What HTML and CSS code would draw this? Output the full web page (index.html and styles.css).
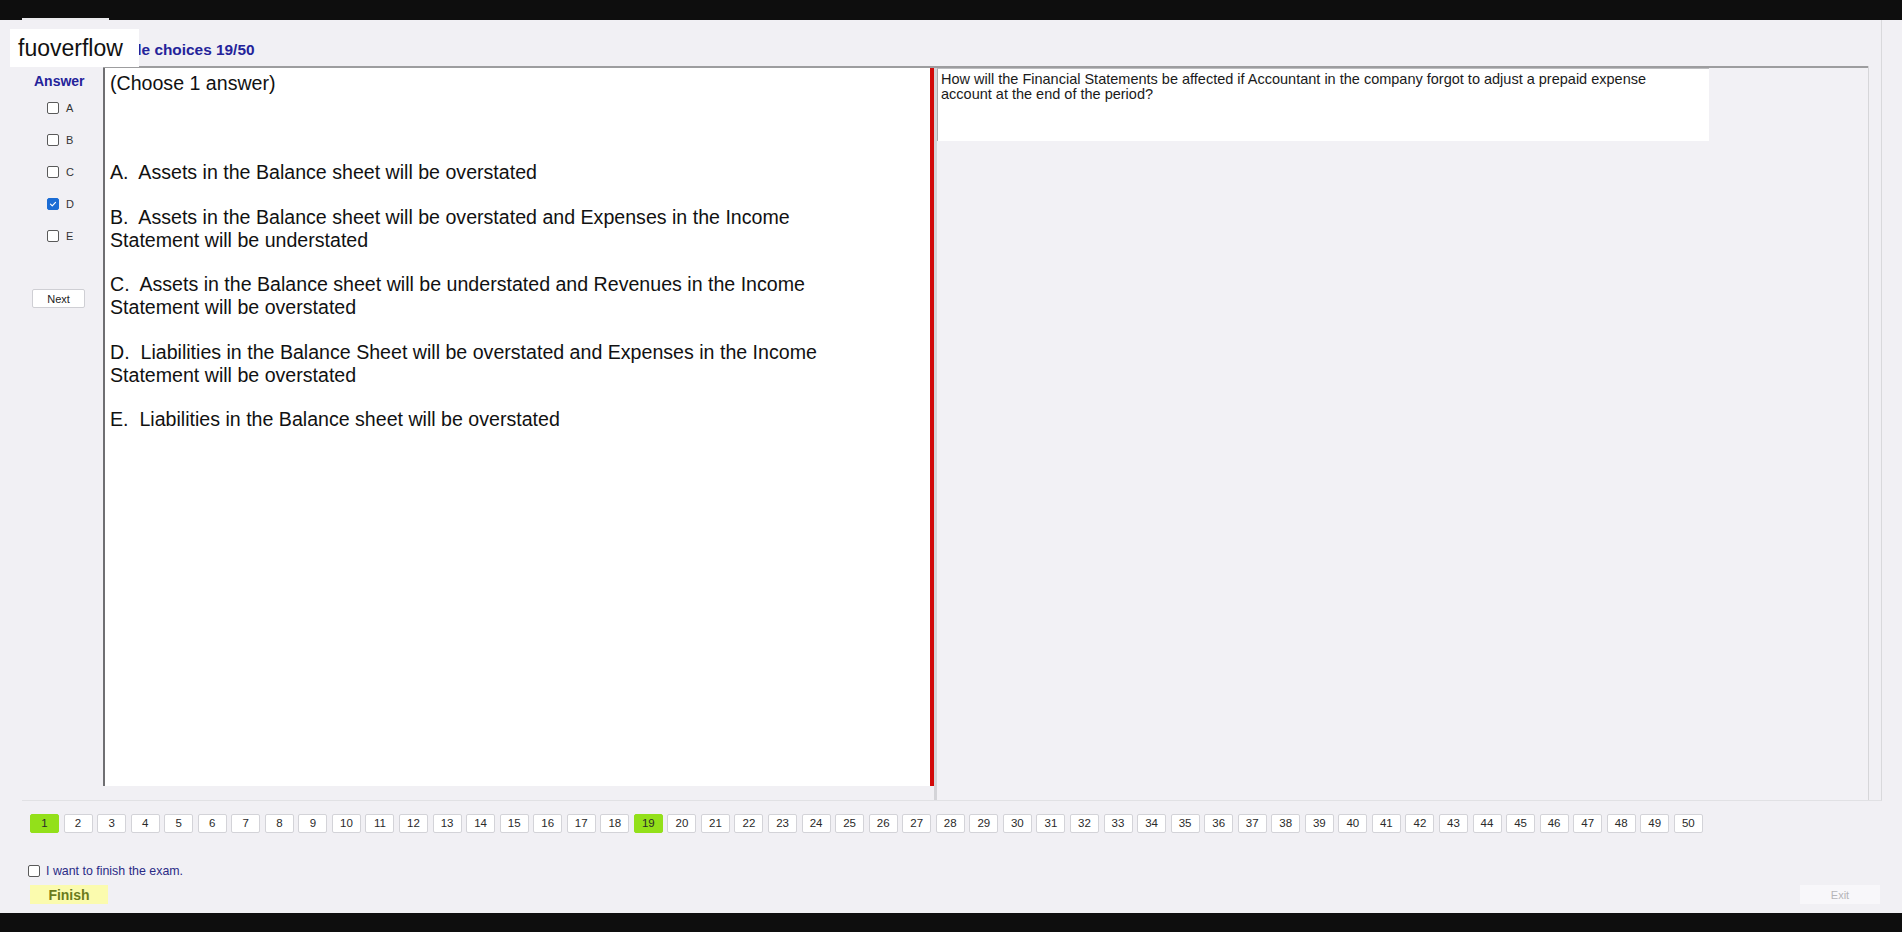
FILE: index.html
```html
<!DOCTYPE html>
<html>
<head>
<meta charset="utf-8">
<link rel="stylesheet" href="styles.css">
</head>
<body>
<div class="topbar"><div class="tab"></div></div>
<div class="screen">
  <div class="window">
    <div class="header"><span class="title">Multiple choices 19/50</span></div>
    <div class="main">
      <aside class="side">
        <div class="ans-title">Answer</div>
        <div class="opts">
          <label class="opt"><span class="cb"></span>A</label>
          <label class="opt"><span class="cb"></span>B</label>
          <label class="opt"><span class="cb"></span>C</label>
          <label class="opt"><span class="cb checked"><svg viewBox="0 0 12 12" width="12" height="12"><path d="M3 6.2 L5.1 8.2 L9 4" fill="none" stroke="#fff" stroke-width="1.4" stroke-linecap="round" stroke-linejoin="round"/></svg></span>D</label>
          <label class="opt"><span class="cb"></span>E</label>
        </div>
        <button class="next">Next</button>
      </aside>
      <div class="content">
        <section class="panel">
          <p class="choose">(Choose 1 answer)</p>
          <div class="options">
            <p>A.&nbsp; Assets in the Balance sheet will be overstated</p>
            <p>B.&nbsp; Assets in the Balance sheet will be overstated and Expenses in the Income Statement will be understated</p>
            <p>C.&nbsp; Assets in the Balance sheet will be understated and Revenues in the Income Statement will be overstated</p>
            <p>D.&nbsp; Liabilities in the Balance Sheet will be overstated and Expenses in the Income Statement will be overstated</p>
            <p>E.&nbsp; Liabilities in the Balance sheet will be overstated</p>
          </div>
        </section>
        <div class="divider"></div>
        <section class="qarea">
          <div class="qbox"><p>How will the Financial Statements be affected if Accountant in the company forgot to adjust a prepaid expense account at the end of the period?</p></div>
        </section>
      </div>
      <div class="strip"></div>
    </div>
  </div>
  <div class="nums">
    <span class="num done">1</span><span class="num">2</span><span class="num">3</span><span class="num">4</span><span class="num">5</span><span class="num">6</span><span class="num">7</span><span class="num">8</span><span class="num">9</span><span class="num">10</span>
    <span class="num">11</span><span class="num">12</span><span class="num">13</span><span class="num">14</span><span class="num">15</span><span class="num">16</span><span class="num">17</span><span class="num">18</span><span class="num done">19</span><span class="num">20</span>
    <span class="num">21</span><span class="num">22</span><span class="num">23</span><span class="num">24</span><span class="num">25</span><span class="num">26</span><span class="num">27</span><span class="num">28</span><span class="num">29</span><span class="num">30</span>
    <span class="num">31</span><span class="num">32</span><span class="num">33</span><span class="num">34</span><span class="num">35</span><span class="num">36</span><span class="num">37</span><span class="num">38</span><span class="num">39</span><span class="num">40</span>
    <span class="num">41</span><span class="num">42</span><span class="num">43</span><span class="num">44</span><span class="num">45</span><span class="num">46</span><span class="num">47</span><span class="num">48</span><span class="num">49</span><span class="num">50</span>
  </div>
  <label class="finish-check"><span class="cb"></span>I want to finish the exam.</label>
  <div class="actions">
    <button class="finish">Finish</button>
    <button class="exit">Exit</button>
  </div>
</div>
<div class="bottombar"></div>
<div class="watermark">fuoverflow</div>
</body>
</html>
```

FILE: styles.css
```css
* { box-sizing: border-box; }
html, body { margin: 0; padding: 0; }
body {
  width: 1902px;
  height: 932px;
  overflow: hidden;
  background: #0e0e0e;
  font-family: "Liberation Sans", Arial, sans-serif;
  color: #111;
  position: relative;
}
.topbar {
  height: 20px;
  background: #0e0e0e;
  position: relative;
}
.tab {
  position: absolute;
  left: 22px;
  bottom: 0;
  width: 87px;
  height: 2px;
  background: #e9e9ec;
}
.screen {
  height: 893px;
  background: #f1f0f4;
  display: flex;
  flex-direction: column;
}
.window {
  margin-left: 22px;
  width: 1860px;
  height: 781px;
  border-right: 1px solid #d9d9dc;
  border-bottom: 1px solid #e1e1e4;
  display: flex;
  flex-direction: column;
}
.header {
  height: 46px;
  padding-left: 70px;
  padding-top: 21px;
}
.title {
  font-weight: bold;
  font-size: 15.4px;
  line-height: 18px;
  color: #24239a;
}
.main {
  flex: 1;
  display: flex;
  align-items: stretch;
}
.side {
  width: 81px;
  padding-top: 6px;
  display: flex;
  flex-direction: column;
}
.ans-title {
  font-weight: bold;
  font-size: 14px;
  line-height: 18px;
  color: #24239a;
  padding-left: 12px;
}
.opts {
  display: flex;
  flex-direction: column;
  gap: 19px;
  margin-top: 11px;
  padding-left: 25px;
}
.opt {
  display: flex;
  align-items: center;
  gap: 7px;
  height: 13px;
  font-size: 11px;
  color: #333;
}
.cb {
  width: 12px;
  height: 12px;
  border: 1px solid #5a5a5a;
  border-radius: 2px;
  background: #fff;
  display: inline-flex;
  align-items: center;
  justify-content: center;
}
.cb.checked {
  background: #1b6cd4;
  border-color: #1b6cd4;
}
.next {
  margin-top: 47px;
  margin-left: 10px;
  width: 53px;
  height: 19px;
  background: #fff;
  border: 1px solid #cfcfd4;
  border-radius: 2px;
  font-family: "Liberation Sans", Arial, sans-serif;
  font-size: 11px;
  color: #222;
  padding: 0;
}
.content {
  width: 1765px;
  display: flex;
  align-items: flex-start;
  border-top: 2px solid #9d9d9f;
}
.panel {
  width: 827px;
  height: 718px;
  background: #fff;
  border-left: 2px solid #6f6f72;
  padding: 4px 5px 0 5px;
  font-size: 19.6px;
  line-height: 23px;
  color: #111;
}
.choose { margin: 0; }
.options {
  max-width: 760px;
  margin-top: 66px;
  display: flex;
  flex-direction: column;
  gap: 21.5px;
}
.options p { margin: 0; }
.divider {
  width: 4px;
  height: 718px;
  background: #d20a0a;
}
.qarea {
  flex: 1;
  align-self: stretch;
  background: #f2f1f5;
  border-left: 3px solid #d4d4d8;
}
.qbox {
  width: 772px;
  height: 73px;
  background: #fff;
  border-left: 1px solid #a9a9ac;
  border-top: 1px solid #bdbdc0;
  padding: 3px 30px 0 3px;
}
.qbox p {
  margin: 0;
  font-size: 14.5px;
  line-height: 15px;
  color: #1a1a1a;
}
.strip {
  flex: 1;
  border-left: 1px solid #d6d6d9;
}
.nums {
  margin-top: 13px;
  margin-left: 30px;
  display: flex;
  gap: 4.55px;
}
.num {
  width: 29px;
  height: 19px;
  background: #fff;
  border: 1px solid #d3d3d8;
  border-radius: 2px;
  font-size: 11.5px;
  line-height: 17px;
  text-align: center;
  color: #2a2a2a;
}
.num.done {
  background: #93e01a;
  border-color: #93e01a;
}
.finish-check {
  margin-top: 31px;
  margin-left: 28px;
  display: flex;
  align-items: center;
  gap: 6px;
  height: 14px;
  font-size: 12.4px;
  color: #2b2b86;
}
.actions {
  margin-top: 7px;
  display: flex;
  justify-content: space-between;
  padding: 0 22px 0 30px;
}
.finish {
  width: 78px;
  height: 19px;
  background: #fbfbae;
  border: none;
  padding: 0;
  font-family: "Liberation Sans", Arial, sans-serif;
  font-weight: bold;
  font-size: 14px;
  color: #6b7b1c;
}
.exit {
  width: 80px;
  height: 19px;
  background: #f8f7fa;
  border: none;
  padding: 0;
  font-family: "Liberation Sans", Arial, sans-serif;
  font-size: 11px;
  color: #b5b5b8;
}
.bottombar {
  height: 19px;
  background: #0e0e0e;
}
.watermark {
  position: absolute;
  left: 10px;
  top: 29px;
  width: 129px;
  height: 38px;
  background: #fff;
  padding-left: 8px;
  font-size: 23px;
  line-height: 38px;
  color: #111;
}
```
